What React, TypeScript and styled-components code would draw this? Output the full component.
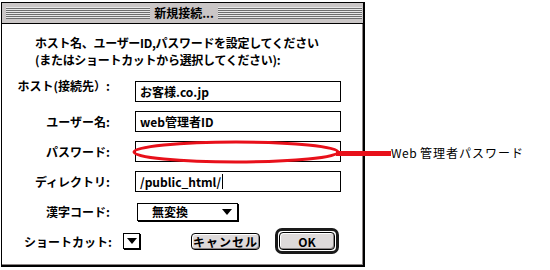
import React from "react";
import styled, { createGlobalStyle } from "styled-components";

const Global = createGlobalStyle`
  html, body { margin: 0; padding: 0; background: #fff; }
  body { font-family: "Noto Sans CJK JP", "Noto Sans", sans-serif; color: #000; }
`;

const Page = styled.div`
  position: relative;
  width: 550px;
  height: 270px;
  padding: 2px 0 0 1px;
  box-sizing: border-box;
`;

const Window = styled.div`
  width: 364px;
  height: 265px;
  box-sizing: border-box;
  border: 1px solid #000;
  border-right-width: 2px;
  border-bottom-width: 2px;
  display: flex;
  flex-direction: column;
  background: #fff;
`;

const TitleBar = styled.div`
  height: 21px;
  box-sizing: border-box;
  background: #cac6c6;
  border-bottom: 1px solid #000;
  display: flex;
  align-items: center;
  padding: 0 1px 0 4px;
`;

const Stripes = styled.div`
  flex: 1;
  height: 13px;
  background: linear-gradient(
    to bottom,
    #e8e8e8 0 1px,
    #6e6e6e 1px 2px,
    #e8e8e8 2px 3px,
    #6e6e6e 3px 4px,
    #e8e8e8 4px 5px,
    #6e6e6e 5px 6px,
    #e8e8e8 6px 7px,
    #6e6e6e 7px 8px,
    #e8e8e8 8px 9px,
    #6e6e6e 9px 10px,
    #e8e8e8 10px 11px,
    #6e6e6e 11px 12px,
    #cac6c6 12px 13px
  );
`;

const Title = styled.div`
  font-size: 12px;
  font-weight: 700;
  line-height: 18px;
  padding: 0 4px;
  white-space: nowrap;
`;

const Content = styled.div`
  flex: 1;
  border-right: 1px solid #8c8585;
  border-bottom: 1px solid #8c8585;
  padding-top: 10px;
  display: flex;
  flex-direction: column;
`;

const Instructions = styled.div`
  margin-left: 33px;
  font-size: 12px;
  font-weight: 700;
  line-height: 17px;
  white-space: nowrap;
  letter-spacing: -0.3px;
`;

const Form = styled.div`
  display: grid;
  grid-template-columns: 108px 206px;
  grid-auto-rows: 21px;
  column-gap: 25px;
  row-gap: 9px;
  margin-top: 13px;
  align-items: center;
`;

const Label = styled.div<{ $lift?: boolean }>`
  text-align: right;
  font-size: 12px;
  font-weight: 700;
  white-space: nowrap;
  line-height: 16px;
  align-self: ${(p) => (p.$lift ? "start" : "center")};
  margin-top: ${(p) => (p.$lift ? "-3px" : "0")};
`;

const Field = styled.div`
  height: 21px;
  box-sizing: border-box;
  border: 1px solid #000;
  padding: 0 4px;
  display: flex;
  align-items: center;
  font-size: 12px;
  font-weight: 700;
  white-space: nowrap;
`;

const Caret = styled.span`
  display: inline-block;
  width: 1px;
  height: 15px;
  background: #000;
  margin-left: 1px;
`;

const Popup = styled.div`
  justify-self: start;
  margin-left: 2px;
  width: 101px;
  height: 18px;
  box-sizing: border-box;
  border: 1px solid #000;
  box-shadow: 1px 1px 0 #000;
  display: flex;
  align-items: center;
  justify-content: space-between;
  padding: 0 5px 0 14px;
  font-size: 12px;
  font-weight: 700;
`;

const Triangle = styled.span`
  width: 0;
  height: 0;
  border-left: 5px solid transparent;
  border-right: 5px solid transparent;
  border-top: 6px solid #000;
`;

const BottomRow = styled.div`
  margin-top: 6px;
  height: 26px;
  display: flex;
  align-items: center;
  padding-left: 22px;
`;

const ShortcutLabel = styled.div`
  font-size: 12px;
  font-weight: 700;
  white-space: nowrap;
  width: 99px;
`;

const MiniPopup = styled.div`
  width: 17px;
  height: 16px;
  box-sizing: border-box;
  border: 1px solid #000;
  box-shadow: 1px 1px 0 #000;
  display: flex;
  align-items: center;
  justify-content: center;
`;

const CancelButton = styled.div`
  margin-left: 51px;
  width: 69px;
  height: 17px;
  box-sizing: border-box;
  border: 1px solid #000;
  border-radius: 4px;
  background: #dedada;
  box-shadow: inset -1px -1px 0 #8a8585, inset 1px 1px 0 #fff;
  display: flex;
  align-items: center;
  justify-content: center;
  font-size: 12px;
  font-weight: 700;
  letter-spacing: 1px;
`;

const DefaultRing = styled.div`
  margin-left: 15px;
  width: 64px;
  height: 26px;
  box-sizing: border-box;
  border: 3px solid #1a1a1a;
  border-radius: 7px;
  background: #fff;
  padding: 1px;
  display: flex;
`;

const OkButton = styled.div`
  flex: 1;
  border: 1px solid #000;
  border-radius: 4px;
  background: #dedada;
  box-shadow: inset -1px -1px 0 #8a8585, inset 1px 1px 0 #fff;
  display: flex;
  align-items: center;
  justify-content: center;
  font-size: 12px;
  font-weight: 700;
`;

const Overlay = styled.svg`
  position: absolute;
  left: 0;
  top: 0;
  width: 550px;
  height: 270px;
  pointer-events: none;
`;

const Note = styled.div`
  position: absolute;
  left: 391px;
  top: 144px;
  font-size: 12px;
  line-height: 17px;
  letter-spacing: 1px;
  white-space: nowrap;
`;

const NoteLatin = styled.span`
  margin-right: 3px;
  letter-spacing: 0.5px;
`;

export default function App() {
  return (
    <>
      <Global />
      <Page>
        <Window>
          <TitleBar>
            <Stripes />
            <Title>新規接続...</Title>
            <Stripes />
          </TitleBar>
          <Content>
            <Instructions>
              ホスト名、ユーザーID,パスワードを設定してください
              <br />
              (またはショートカットから選択してください):
            </Instructions>
            <Form>
              <Label $lift>ホスト(接続先）:</Label>
              <Field>お客様.co.jp</Field>
              <Label>ユーザー名:</Label>
              <Field>web管理者ID</Field>
              <Label>パスワード:</Label>
              <Field />
              <Label>ディレクトリ:</Label>
              <Field>
                /public_html/
                <Caret />
              </Field>
              <Label>漢字コード:</Label>
              <Popup>
                <span>無変換</span>
                <Triangle />
              </Popup>
            </Form>
            <BottomRow>
              <ShortcutLabel>ショートカット:</ShortcutLabel>
              <MiniPopup>
                <Triangle />
              </MiniPopup>
              <CancelButton>キャンセル</CancelButton>
              <DefaultRing>
                <OkButton>OK</OkButton>
              </DefaultRing>
            </BottomRow>
          </Content>
        </Window>
        <Overlay viewBox="0 0 550 270">
          <ellipse cx="236" cy="152" rx="102" ry="10" fill="none" stroke="#e8101a" strokeWidth="3" />
          <rect x="336" y="151" width="55" height="5" fill="#e8101a" />
        </Overlay>
        <Note>
          <NoteLatin>Web</NoteLatin>管理者パスワード
        </Note>
      </Page>
    </>
  );
}
